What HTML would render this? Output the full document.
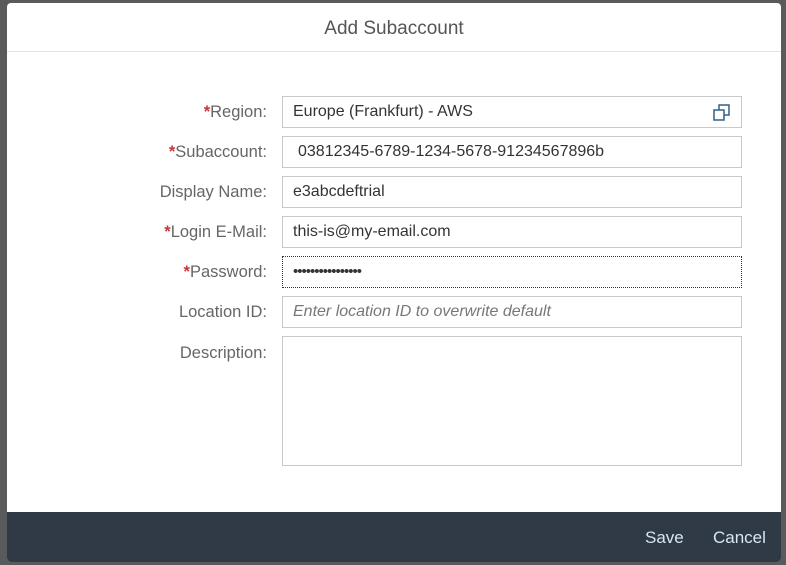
<!DOCTYPE html>
<html><head><style>
body{margin:0;width:786px;height:565px;background:#5a5a5a;position:relative;overflow:hidden;font-family:"Liberation Sans",Arial,sans-serif}
.dlg{position:absolute;left:7px;top:3px;width:774px;height:559px;background:#fff;border-radius:4px;overflow:hidden}
.hdr{height:48px;border-bottom:1px solid #e5e5e5;text-align:center;line-height:52px;font-size:19px;color:#555}
.lbl{position:absolute;right:514px;font-size:16.5px;color:#666;text-align:right;white-space:nowrap}
.lbl b{color:#c8353a;font-weight:bold}
.in{position:absolute;left:275px;font-size:16px;color:#333;line-height:30px;padding-left:10px;box-sizing:border-box;width:460px;height:32px;border:1px solid #c9c9c9}
.ftr{position:absolute;left:0;bottom:0;width:100%;height:50px;background:#2f3a46}
.ftr span{position:absolute;top:16px;font-size:17px;color:#d8e5f3}
</style></head><body>
<div class="dlg">
<div class="hdr">Add Subaccount</div>
<div class="lbl" style="top:100px"><b>*</b>Region:</div>
<div class="in" style="top:93px">Europe (Frankfurt) - AWS
<svg style="position:absolute;right:10px;top:7px" width="18" height="18" viewBox="0 0 18 18" fill="none" stroke="#346187" stroke-width="1.5"><rect x="1" y="6" width="10" height="10"/><path d="M6 6V1h10v10h-5"/></svg></div>
<div class="lbl" style="top:140px"><b>*</b>Subaccount:</div>
<div class="in" style="top:133px;padding-left:15px">03812345-6789-1234-5678-91234567896b</div>
<div class="lbl" style="top:180px">Display Name:</div>
<div class="in" style="top:173px">e3abcdeftrial</div>
<div class="lbl" style="top:220px"><b>*</b>Login E-Mail:</div>
<div class="in" style="top:213px">this-is@my-email.com</div>
<div class="lbl" style="top:260px"><b>*</b>Password:</div>
<div class="in" style="top:253px;border:1px dotted #333;font-size:15px;letter-spacing:-1px">••••••••••••••••</div>
<div class="lbl" style="top:300px">Location ID:</div>
<div class="in" style="top:293px;color:#777;font-style:italic">Enter location ID to overwrite default</div>
<div class="lbl" style="top:341px">Description:</div>
<div class="in" style="top:333px;height:130px"></div>
<div class="ftr"><span style="left:638px">Save</span><span style="left:706px">Cancel</span></div>
</div>
</body></html>
